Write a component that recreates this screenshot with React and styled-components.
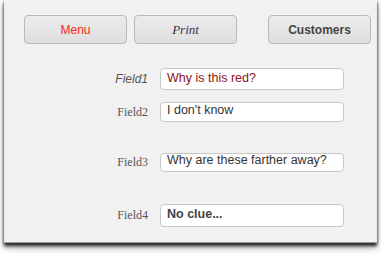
import React from "react";
import styled, { createGlobalStyle } from "styled-components";

const Global = createGlobalStyle`
  html, body {
    margin: 0;
    padding: 0;
    background: #ffffff;
  }
  #root {
    padding-bottom: 11px;
    overflow: visible;
  }
`;

const fields = [
  { label: "Field1", value: "Why is this red?", labelKind: "italic", tone: "red", h: 22, lift: 1, gap: 24 },
  { label: "Field2", value: "I don't know", labelKind: "serif", h: 20, lift: 2, gap: 12 },
  { label: "Field3", value: "Why are these farther away?", labelKind: "serif", h: 19, lift: 3, gap: 31 },
  { label: "Field4", value: "No clue...", labelKind: "serif", bold: true, h: 23, lift: 2, gap: 32 },
];

export default function App() {
  return (
    <>
      <Global />
      <Window>
        <Toolbar>
          <Button $tone="menu">Menu</Button>
          <Button $tone="print">Print</Button>
          <Button $tone="bold" $push>
            Customers
          </Button>
        </Toolbar>
        {fields.map((f) => (
          <Row key={f.label} $gap={f.gap}>
            <Label $kind={f.labelKind}>{f.label}</Label>
            <Field
              readOnly
              defaultValue={f.value}
              $h={f.h}
              $lift={f.lift}
              $red={f.tone === "red"}
              $bold={f.bold}
            />
          </Row>
        ))}
      </Window>
    </>
  );
}

const Window = styled.div`
  margin: 0 4px;
  width: 373px;
  height: 243px;
  box-sizing: border-box;
  padding: 15px 6px 0 20px;
  background: #f1f1f1;
  border-bottom: 1px solid #9a9a9a;
  box-shadow: 0 3px 3px rgba(0, 0, 0, 0.75), 0 5px 7px rgba(0, 0, 0, 0.3),
    0 0 3px rgba(0, 0, 0, 0.35);
  font-family: "Liberation Sans", Arial, sans-serif;
`;

const Toolbar = styled.div`
  display: flex;
  gap: 7px;
`;

const Button = styled.div`
  width: 103px;
  height: 29px;
  box-sizing: border-box;
  border: 1px solid #b9b9b9;
  border-radius: 4px;
  background: linear-gradient(#ececec, #dedede);
  display: flex;
  align-items: center;
  justify-content: center;
  font-size: 12px;
  margin-left: ${({ $push }) => ($push ? "auto" : "0")};
  color: ${({ $tone }) =>
    $tone === "menu" ? "#f5261a" : $tone === "print" ? "#33334d" : "#454545"};
  font-weight: ${({ $tone }) => ($tone === "bold" ? 700 : 400)};
  font-style: ${({ $tone }) => ($tone === "print" ? "italic" : "normal")};
  font-family: ${({ $tone }) =>
    $tone === "print"
      ? '"Liberation Serif", "Times New Roman", serif'
      : '"Liberation Sans", Arial, sans-serif'};
  ${({ $tone }) => ($tone === "print" ? "font-size: 13px;" : "")}
`;

const Row = styled.div`
  display: grid;
  grid-template-columns: 124px 184px;
  column-gap: 12px;
  align-items: center;
  margin-top: ${({ $gap }) => $gap}px;
`;

const Label = styled.div`
  text-align: right;
  font-size: 12px;
  color: #555555;
  font-style: ${({ $kind }) => ($kind === "italic" ? "italic" : "normal")};
  font-family: ${({ $kind }) =>
    $kind === "italic"
      ? '"Liberation Sans", Arial, sans-serif'
      : '"Liberation Serif", "Times New Roman", serif'};
`;

const Field = styled.input`
  width: 184px;
  height: ${({ $h }) => $h}px;
  box-sizing: border-box;
  border: 1px solid #c6c6c6;
  border-radius: 4px;
  background: #ffffff;
  padding: 0 6px ${({ $lift }) => $lift * 2}px;
  outline: none;
  font-family: "Liberation Sans", Arial, sans-serif;
  font-size: 12.5px;
  font-weight: ${({ $bold }) => ($bold ? 700 : 400)};
  color: ${({ $red, $bold }) => ($red ? "#8e1515" : $bold ? "#444444" : "#333333")};
`;
